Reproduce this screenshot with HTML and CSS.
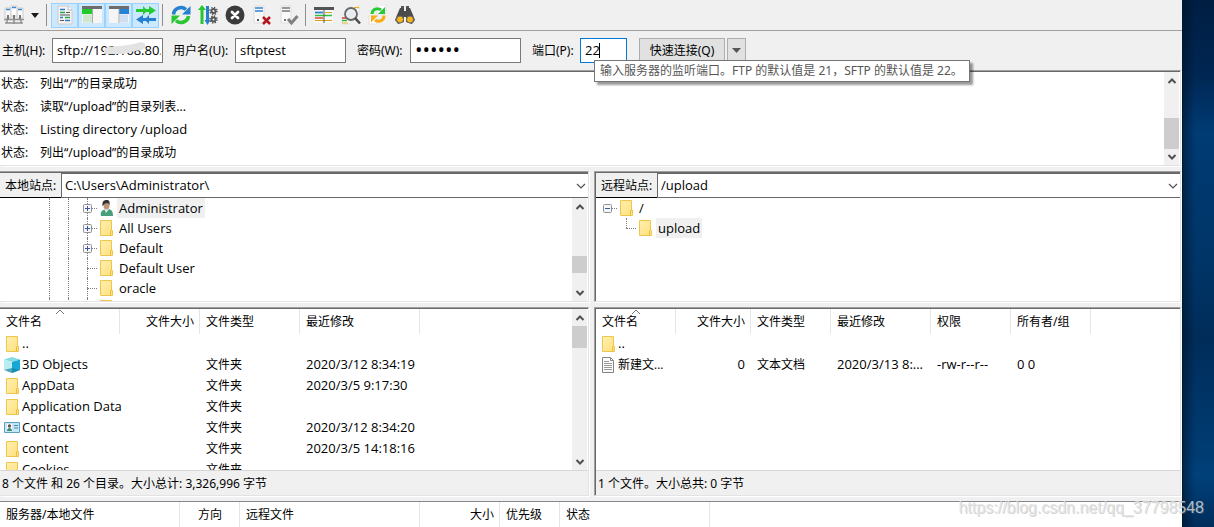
FILE: index.html
```html
<!DOCTYPE html>
<html lang="zh-CN">
<head>
<meta charset="utf-8">
<title>FileZilla</title>
<link rel="stylesheet" href="styles.css">
</head>
<body>
<svg class="defs" aria-hidden="true">
  <defs>
    <linearGradient id="fold" x1="0" y1="0" x2="1" y2="1"><stop offset="0" stop-color="#ffefb0"/><stop offset="1" stop-color="#ffe07c"/></linearGradient>
    <symbol id="folder" viewBox="0 0 13 16"><path d="M.5.5h11v10h1v5H.5z" fill="url(#fold)" stroke="#eec64e"/><path d="M10.5 15.500v-4.500l1-1" fill="none" stroke="#eabb3c"/></symbol>
    <symbol id="up" viewBox="0 0 10 8"><path d="M1.500 6 5 2.500 8.500 6" fill="none" stroke="#505050" stroke-width="2"/></symbol>
    <symbol id="down" viewBox="0 0 10 8"><path d="M1.500 2 5 5.500 8.500 2" fill="none" stroke="#505050" stroke-width="2"/></symbol>
    <symbol id="thin" viewBox="0 0 10 6"><path d="M1 1l4 4 4-4" fill="none" stroke="#505050" stroke-width="1.200"/></symbol>
    <symbol id="sort" viewBox="0 0 10 6"><path d="M1 5l4-4 4 4" fill="none" stroke="#707070"/></symbol>
    <symbol id="plus" viewBox="0 0 9 9"><rect x=".5" y=".5" width="8" height="8" rx="1" fill="#f6f6f6" stroke="#919191"/><path d="M2 4.500h5M4.500 2v5" stroke="#3657a5"/></symbol>
    <symbol id="minus" viewBox="0 0 9 9"><rect x=".5" y=".5" width="8" height="8" rx="1" fill="#f6f6f6" stroke="#919191"/><path d="M2 4.500h5" stroke="#3657a5"/></symbol>
  </defs>
</svg>
<main class="app">
  <div class="toolbar" role="toolbar">
    <button class="tool" aria-label="站点管理器"><svg width="22" height="22" viewBox="0 0 22 22"><path d="M2 4h6v10H2zM14 4h6v10h-6z" fill="#fafafa" stroke="#ccc"/><path d="M8 2h6v10H8z" fill="#fff" stroke="#ccc"/><path d="M3 5.500h4M9 3.500h4M15 5.500h4" stroke="#3c8ad0" stroke-width="1.500"/><path d="M5 11v4M11 11v5M17 11v4" stroke="#777" stroke-width="2"/><path d="M1 15.500h20M2 19h18M4 15v4M11 15v5M18 15v4" stroke="#909090" stroke-width="1.500"/></svg></button>
    <button class="caret" aria-label="站点列表"><svg width="8" height="5" viewBox="0 0 8 5"><path d="M0 0h8L4 5z" fill="#1b1b1b"/></svg></button>
    <span class="sep"></span>
    <button class="tool on" aria-label="消息日志"><svg width="20" height="20" viewBox="0 0 20 20"><path d="M3 1h10l4 4v14H3z" fill="#f4f4f4" stroke="#ccc"/><path d="M13 1v4h4" fill="#fff" stroke="#bbb"/><path d="M5 4.500h5M5 12.500h3M10 15.500h5" stroke="#2d79c7" stroke-width="1.400"/><path d="M5 7.500h5M10 12.500h5" stroke="#25a843" stroke-width="1.400"/><path d="M11 7.500h4M5 10h10M5 15.500h4" stroke="#555" stroke-width="1.200"/></svg></button>
    <button class="tool on" aria-label="本地目录树"><svg width="20" height="20" viewBox="0 0 20 20"><path d="M0 1h20v17H0z" fill="#f5f5f5"/><path d="M0 1h20v3H0z" fill="#6d6d6d"/><path d="M0 4h10v5H0z" fill="#20ca2a"/><path d="M1 9.500h9v8H1z" fill="#cfe7cf"/><path d="M10.500 4v14" stroke="#aaa"/></svg></button>
    <button class="tool on" aria-label="远程目录树"><svg width="20" height="20" viewBox="0 0 20 20"><path d="M0 1h20v17H0z" fill="#f5f5f5"/><path d="M0 1h20v3H0z" fill="#6d6d6d"/><path d="M10 4h10v5H10z" fill="#2581d8"/><path d="M11 9.500h8v8h-8z" fill="#cddff0"/><path d="M10 4v14" stroke="#aaa"/></svg></button>
    <button class="tool on" aria-label="传输队列"><svg width="20" height="20" viewBox="0 0 20 20"><path d="M0 4h7V1l3 3h3V1l7 4.500-7 4.500V7h-3l-3 3V7H0z" fill="#25cb31"/><path d="M20 13h-7v-3l-3 3H7v-3l-7 4.500L7 19v-3h3l3 3v-3h7z" fill="#257fd3"/></svg></button>
    <span class="sep"></span>
    <button class="tool" aria-label="刷新"><svg width="20" height="20" viewBox="0 0 20 20"><path d="M2.500 9.500A7.500 7.500 0 0 1 15 4.500" fill="none" stroke="#2680d2" stroke-width="3.600"/><path d="M19.500 1v8.500H11z" fill="#2680d2"/><path d="M17.500 11A7.500 7.500 0 0 1 5 15.500" fill="none" stroke="#28c733" stroke-width="3.600"/><path d="M.5 19v-8.500H9z" fill="#28c733"/></svg></button>
    <button class="tool" aria-label="处理队列"><svg width="20" height="20" viewBox="0 0 20 20"><path d="M4 0 0 5h2.500v14h3V5H8z" fill="#25c831"/><path d="m9.500 20 3-5H11V1H8v14H6.500z" fill="#257fd3"/><circle cx="15.500" cy="6" r="2" fill="none" stroke="#555" stroke-width="1.800"/><circle cx="15.500" cy="6" r="3.500" fill="none" stroke="#555" stroke-width="1.500" stroke-dasharray="1.375"/><circle cx="15.500" cy="14.500" r="2" fill="none" stroke="#555" stroke-width="1.800"/><circle cx="15.500" cy="14.500" r="3.500" fill="none" stroke="#555" stroke-width="1.500" stroke-dasharray="1.375"/></svg></button>
    <button class="tool" aria-label="取消"><svg width="20" height="20" viewBox="0 0 20 20"><circle cx="10" cy="10" r="9.500" fill="#3b3b3b"/><path d="m7 7 6 6m0-6-6 6" stroke="#fff" stroke-width="2.800" stroke-linecap="round"/></svg></button>
    <button class="tool" aria-label="断开连接"><svg width="20" height="20" viewBox="0 0 20 20"><path d="M2 1h10v17H2z" fill="#f9f9f9" stroke="#ddd"/><path d="M3 3h8M3 6h8" stroke="#3183d1" stroke-width="1.700"/><path d="M5 15h2" stroke="#555" stroke-width="2"/><path d="m11 12 7 7m0-7-7 7" stroke="#b3161d" stroke-width="2.500"/></svg></button>
    <button class="tool" aria-label="重新连接"><svg width="20" height="20" viewBox="0 0 20 20"><path d="M2 1h10v17H2z" fill="#f9f9f9" stroke="#ddd"/><path d="M3 3h8M3 6h8" stroke="#777" stroke-width="1.500"/><path d="M5 15h2" stroke="#777" stroke-width="2"/><path d="m9 14 3.500 4 6-7" fill="none" stroke="#808080" stroke-width="3"/></svg></button>
    <span class="sep"></span>
    <button class="tool" aria-label="过滤器"><svg width="20" height="20" viewBox="0 0 20 20"><path d="M1 2h18v16H1z" fill="#f8f8f8"/><path d="M0 2h20v3H0z" fill="#535353"/><path d="M1 7.500h8" stroke="#2c80cb" stroke-width="1.800"/><path d="M1 10.500h17" stroke="#31c03c" stroke-width="1.500"/><path d="M1 13h8" stroke="#e14545" stroke-width="1.500"/><path d="M11 7.500h7M1 15.500h17" stroke="#d6a520"/><path d="M10 2v16" stroke="#555"/></svg></button>
    <button class="tool" aria-label="搜索"><svg width="20" height="20" viewBox="0 0 20 20"><path d="M11 0h7v9h-7zM1 10h8v9H1z" fill="#fff" stroke="#e2e2e2"/><path d="M13 2.500h5" stroke="#e6b02c" stroke-width="1.500"/><path d="M1 13h6" stroke="#e22f2f" stroke-width="1.500"/><path d="M1 15.500h5" stroke="#2ab738" stroke-width="1.500"/><path d="M1 18h6" stroke="#ddb032"/><circle cx="10" cy="9" r="6" fill="#e9edf0" stroke="#686868" stroke-width="1.800"/><path d="m14 13 5 5.500" stroke="#4c4c4c" stroke-width="2.600"/></svg></button>
    <button class="tool" aria-label="同步浏览"><svg width="20" height="20" viewBox="0 0 20 20"><path d="M9 0h9v9H9zM1 11h8v8H1z" fill="#fff" stroke="#e1e1e1"/><path d="M4 9A5.500 5.500 0 0 1 13 5" fill="none" stroke="#28c936" stroke-width="3"/><path d="M17 2v7h-7z" fill="#28c936"/><path d="M16 10.500A5.500 5.500 0 0 1 7 15" fill="none" stroke="#f5ae19" stroke-width="3"/><path d="M3 17.500v-7h7z" fill="#f5ae19"/></svg></button>
    <button class="tool" aria-label="查找文件"><svg width="20" height="20" viewBox="0 0 20 20"><path d="M5 3h4v3h2V3h4l3 7 2 5-3 4-6-2v-5H9v5l-6 2-3-4 2-5z" fill="#4c4c4c"/><path d="M6 1h3v2H6zm5 0h3v2h-3z" fill="#555"/><circle cx="5" cy="14.500" r="3.500" fill="#f7b51b" stroke="#666"/><circle cx="15" cy="14.500" r="3.500" fill="#f7b51b" stroke="#666"/></svg></button>
  </div>

  <form class="quick">
    <label for="host">主机(H):</label>
    <span class="host"><input id="host" class="field" value="sftp://192.168.80.1"><svg class="smudge" width="44" height="14" viewBox="0 0 44 14"><path d="M1 8C4 3 10 5 17 4S27 3 34 1s9 1 8 4-4 3-10 4-8 3-16 3S0 14 1 8z" fill="#e3e3e3"/></svg></span>
    <label for="user">用户名(U):</label>
    <input id="user" class="field" value="sftptest">
    <label for="pass">密码(W):</label>
    <input id="pass" class="field" type="password" value="secret">
    <label for="port" class="portlabel">端口(P):</label>
    <span class="port"><input id="port" class="field focused" value="22"><i class="cursor"></i><span class="tip" role="tooltip">输入服务器的监听端口。FTP 的默认值是 21，SFTP 的默认值是 22。</span></span>
    <button type="button" class="connect">快速连接(Q)</button>
    <button type="button" class="history" aria-label="历史"><svg width="9" height="5" viewBox="0 0 9 5"><path d="M0 0h9L4.500 5z" fill="#555"/></svg></button>
  </form>

  <section class="panel log">
    <dl class="messages">
      <dt>状态:</dt><dd>列出“/”的目录成功</dd>
      <dt>状态:</dt><dd>读取“/upload”的目录列表...</dd>
      <dt>状态:</dt><dd class="latin">Listing directory /upload</dd>
      <dt>状态:</dt><dd>列出“/upload”的目录成功</dd>
    </dl>
    <div class="scroll"><svg width="10" height="8"><use href="#up"/></svg><div class="track end"><i class="thumb long"></i></div><svg width="10" height="8"><use href="#down"/></svg></div>
  </section>

  <div class="split trees">
    <section class="panel pane local">
      <div class="site"><label for="lpath">本地站点:</label><span class="combo"><select id="lpath"><option>C:\Users\Administrator\</option></select><svg width="10" height="6"><use href="#thin"/></svg></span></div>
      <div class="view">
        <ul class="tree deep">
          <li><i class="guide"></i><i class="guide"></i><span class="node"><svg width="9" height="9"><use href="#plus"/></svg></span><svg class="ico" width="13" height="16" viewBox="0 0 13 16"><path d="M1 16c-1-4 1-6 4-6.500l4-.5c3 1 4 3 4 7z" fill="#46a07b"/><path d="M4.500 9 6 13l3-4z" fill="#eee"/><ellipse cx="6.500" cy="5.500" rx="3" ry="4" fill="#bf9478"/><path d="M2.500 6C2 2 3.500 0 6.500 0S10 2 9.500 5L8 3 5 3.500z" fill="#383030"/></svg><span class="name picked">Administrator</span></li>
          <li><i class="guide"></i><i class="guide"></i><span class="node"><svg width="9" height="9"><use href="#plus"/></svg></span><svg class="ico" width="13" height="16"><use href="#folder"/></svg><span class="name">All Users</span></li>
          <li><i class="guide"></i><i class="guide"></i><span class="node"><svg width="9" height="9"><use href="#plus"/></svg></span><svg class="ico" width="13" height="16"><use href="#folder"/></svg><span class="name">Default</span></li>
          <li><i class="guide"></i><i class="guide"></i><span class="node"></span><svg class="ico" width="13" height="16"><use href="#folder"/></svg><span class="name">Default User</span></li>
          <li><i class="guide"></i><i class="guide"></i><span class="node"></span><svg class="ico" width="13" height="16"><use href="#folder"/></svg><span class="name">oracle</span></li>
          <li><i class="guide"></i><i class="guide"></i><span class="node"></span><svg class="ico" width="13" height="16"><use href="#folder"/></svg></li>
        </ul>
        <div class="scroll"><svg width="10" height="8"><use href="#up"/></svg><div class="track near"><i class="thumb"></i></div><svg width="10" height="8"><use href="#down"/></svg></div>
      </div>
    </section>
    <section class="panel pane remote">
      <div class="site"><label for="rpath">远程站点:</label><span class="combo"><select id="rpath"><option>/upload</option></select><svg width="10" height="6"><use href="#thin"/></svg></span></div>
      <div class="view">
        <ul class="tree">
          <li><span class="node root"><svg width="9" height="9"><use href="#minus"/></svg></span><svg class="ico" width="13" height="16"><use href="#folder"/></svg><span class="name">/</span></li>
          <li><i class="guide blank"></i><span class="node last"></span><svg class="ico" width="13" height="16"><use href="#folder"/></svg><span class="name picked">upload</span></li>
        </ul>
      </div>
    </section>
  </div>

  <div class="split lists">
    <section class="panel pane local">
      <div class="view">
        <div class="files">
        <table>
          <colgroup><col class="w120"><col class="w80"><col class="w100"><col class="w120"><col></colgroup>
          <thead><tr><th>文件名<svg class="sort" width="10" height="6"><use href="#sort"/></svg></th><th class="num">文件大小</th><th>文件类型</th><th>最近修改</th><th></th></tr></thead>
          <tbody>
            <tr><td><span class="file"><svg width="13" height="16"><use href="#folder"/></svg>..</span></td><td></td><td></td><td></td><td></td></tr>
            <tr><td><span class="file wide"><svg width="16" height="16" viewBox="0 0 16 16"><path d="M0 2.500 8 0l8 2.500L8 5z" fill="#83dbe4"/><path d="M0 2.500 8 5v11l-8-3z" fill="#b9eef1"/><path d="M8 5l8-2.500V13l-8 3z" fill="#18a8d8"/><path d="m0 13 8-2 8 2-8 3z" fill="#16809d" opacity=".65"/></svg>3D Objects</span></td><td></td><td>文件夹</td><td class="latin">2020/3/12 8:34:19</td><td></td></tr>
            <tr><td><span class="file"><svg width="13" height="16"><use href="#folder"/></svg>AppData</span></td><td></td><td>文件夹</td><td class="latin">2020/3/5 9:17:30</td><td></td></tr>
            <tr><td><span class="file"><svg width="13" height="16"><use href="#folder"/></svg>Application Data</span></td><td></td><td>文件夹</td><td></td><td></td></tr>
            <tr><td><span class="file wide"><svg width="16" height="16" viewBox="0 0 16 16"><path d="M.5 2.500h15v10H.5z" fill="#c5e7f9" stroke="#5c9fc4"/><path d="M3 4h5v7H3z" fill="#fff"/><circle cx="5.500" cy="6" r="1.700" fill="#695448"/><path d="M3 11c0-4 5-4 5 0z" fill="#3a8f6c"/><path d="M10 5.500h4M10 8h4" stroke="#4885a9"/></svg>Contacts</span></td><td></td><td>文件夹</td><td class="latin">2020/3/12 8:34:20</td><td></td></tr>
            <tr><td><span class="file"><svg width="13" height="16"><use href="#folder"/></svg>content</span></td><td></td><td>文件夹</td><td class="latin">2020/3/5 14:18:16</td><td></td></tr>
            <tr><td><span class="file"><svg width="13" height="16"><use href="#folder"/></svg>Cookies</span></td><td></td><td>文件夹</td><td></td><td></td></tr>
          </tbody>
        </table>
        </div>
        <div class="scroll"><svg width="10" height="8"><use href="#up"/></svg><div class="track"><i class="thumb tall"></i></div><svg width="10" height="8"><use href="#down"/></svg></div>
      </div>
      <p class="status">8 个文件 和 26 个目录。大小总计: 3,326,996 字节</p>
    </section>
    <section class="panel pane remote">
      <div class="view">
        <div class="files">
        <table>
          <colgroup><col class="w80"><col class="w75"><col class="w80"><col class="w100"><col class="w80"><col class="w80"><col></colgroup>
          <thead><tr><th>文件名<svg class="sort" width="10" height="6"><use href="#sort"/></svg></th><th class="num">文件大小</th><th>文件类型</th><th>最近修改</th><th>权限</th><th>所有者/组</th><th></th></tr></thead>
          <tbody>
            <tr><td><span class="file"><svg width="13" height="16"><use href="#folder"/></svg>..</span></td><td></td><td></td><td></td><td></td><td></td><td></td></tr>
            <tr><td><span class="file doc"><svg width="12" height="16" viewBox="0 0 12 16"><path d="M.5.5h8l3 3v12H.5z" fill="#fbfbfb" stroke="#858585"/><path d="M8.500.5v3h3" fill="none" stroke="#858585"/><path d="M2 4.500h5M2 6.500h8M2 8.500h8M2 10.500h8M2 12.500h8" stroke="#999"/></svg>新建文...</span></td><td class="num latin">0</td><td>文本文档</td><td class="latin">2020/3/13 8:...</td><td class="latin">-rw-r--r--</td><td class="latin">0 0</td><td></td></tr>
          </tbody>
        </table>
        </div>
      </div>
      <p class="status">1 个文件。大小总共: 0 字节</p>
    </section>
  </div>

  <section class="queue">
    <table>
      <colgroup><col class="w180"><col class="w60"><col class="w180"><col class="w80"><col class="w60"><col class="w150"><col></colgroup>
      <thead><tr><th>服务器/本地文件</th><th class="center">方向</th><th>远程文件</th><th class="num">大小</th><th>优先级</th><th>状态</th><th></th></tr></thead>
    </table>
  </section>
</main>
<aside class="desktop"></aside>
<span class="watermark">https://blog.csdn.net/qq_37798548</span>
</body>
</html>
```

FILE: styles.css
```css
* { box-sizing: border-box; }
body {
  margin: 0;
  height: 100vh;
  overflow: hidden;
  display: flex;
  position: relative;
  font: 12px/20px "Noto Sans", "Noto Sans CJK SC", sans-serif;
  color: #000;
}
button, input, select { font: inherit; color: inherit; margin: 0; }
svg { display: block; flex: none; }
.defs { position: absolute; width: 0; height: 0; }
.app { flex: 1; min-width: 0; display: flex; flex-direction: column; background: #f0f0f0; }
.desktop {
  flex: 0 0 32px;
  border-left: 1px solid #001a30;
  background:
    linear-gradient(90deg, rgba(0, 15, 35, .5), transparent 12px),
    linear-gradient(#001e42, #002652 14%, #003b74 25%, #003567 50%, #002c59 64%, #003d74 87%, #00417a 90%, #002d5b);
}
.latin, .name, .file, .field, .combo select { font-family: "Open Sans", "Noto Sans CJK SC", sans-serif; font-size: 13px; }

/* Toolbar */
.toolbar { flex: none; display: flex; align-items: center; height: 31px; border-bottom: 1px solid #a0a0a0; }
.tool, .caret { border: 1px solid transparent; background: none; padding: 0; display: flex; align-items: center; justify-content: center; }
.tool { width: 27px; height: 25px; }
.tool.on { background: #cce8ff; border-color: #99d1ff; }
.caret { width: 16px; height: 25px; }
.sep { width: 1px; height: 22px; background: #8d8d8d; margin: 0 4px 0 3px; }

/* Quick connect */
.quick { flex: none; display: flex; align-items: center; height: 39px; padding-left: 2px; gap: 6px; }
.quick label { min-width: 44px; white-space: nowrap; }
.quick label[for="user"] { min-width: 56px; margin-left: 4px; }
.quick label[for="pass"] { min-width: 47px; margin-left: 5px; }
.quick .portlabel { min-width: 42px; margin-left: 5px; }
.host, .port { position: relative; display: flex; }
.field { width: 111px; height: 25px; border: 1px solid #7a7a7a; border-radius: 0; background: #fff; padding: 0 1px 2px 4px; outline: none; }
.field[type="password"] { font-size: 20px; }
.port .field { width: 47px; }
.port .focused { border-color: #0078d7; }
.smudge { position: absolute; left: 51px; top: 4px; }
.cursor { position: absolute; left: 19px; top: 5px; width: 1px; height: 15px; background: #000; }
.tip {
  position: absolute; z-index: 2; left: 14px; top: 22px;
  border: 1px solid #767676; background: #fff; color: #575757;
  padding: 0 6px 0 5px; white-space: nowrap; box-shadow: 3px 3px 2px rgba(0, 0, 0, .4);
}
.connect, .history { height: 25px; border: 1px solid #adadad; background: #e1e1e1; padding: 0; display: flex; align-items: center; justify-content: center; }
.connect { width: 86px; margin-left: 6px; }
.history { width: 19px; margin-left: -4px; }

/* Sunken panels */
.panel { background: #fff; border-top: 1px solid #a0a0a0; border-bottom: 1px solid #e3e3e3; border-right: 1px solid #e3e3e3; box-shadow: inset 0 1px #696969, 1px 1px #fff; padding-top: 1px; margin-right: 1px; }
.remote { border-left: 1px solid #a0a0a0; box-shadow: inset 1px 1px #696969, 1px 1px #fff; padding-left: 1px; }
.log { flex: 0 0 96px; display: flex; overflow: hidden; }
.messages { flex: 1; margin: 0; padding: 0 1px; display: grid; grid-template-columns: 39px 1fr; grid-auto-rows: 23px; line-height: 23px; }
.messages dd { margin: 0; }

/* Scroll bars */
.scroll { flex: 0 0 16px; display: flex; flex-direction: column; align-items: center; padding: 5px 1px 4px 0; background: linear-gradient(90deg, #f0f0f0 15px, #fff 15px); }
.track { flex: 1; width: 15px; display: flex; flex-direction: column; padding: 4px 0; }
.thumb { height: 17px; background: #cdcdcd; }
.thumb.long { height: 31px; }
.thumb.tall { height: 22px; }
.end { justify-content: flex-end; }
.near { justify-content: flex-end; padding-bottom: 16px; }

/* Split areas */
.split { display: grid; grid-template-columns: 590fr 588fr; gap: 4px; min-height: 0; }
.trees { flex: 0 0 131px; margin-top: 5px; }
.lists { flex: 1; margin-top: 5px; }
.pane { display: flex; flex-direction: column; min-width: 0; min-height: 0; overflow: hidden; }
.site { flex: none; display: flex; height: 25px; }
.site label { flex: 0 0 61px; padding-left: 5px; background: #f0f0f0; border-bottom: 1px solid #000; line-height: 25px; white-space: nowrap; }
.combo { flex: 1; position: relative; display: flex; }
.combo select { flex: 1; appearance: none; border: 1px solid #696969; border-right: 0; border-radius: 0; background: #fff; padding: 0 3px 2px; outline: none; }
.combo svg { position: absolute; right: 2px; top: 10px; pointer-events: none; }
.view { flex: 1; min-height: 0; display: flex; overflow: hidden; }

/* Trees */
.tree { flex: 1; list-style: none; margin: 0; padding: 0 0 0 2px; }
.tree.deep { padding-left: 40px; }
.tree li { display: flex; align-items: center; height: 20px; }
.guide, .node { width: 19px; height: 20px; position: relative; }
.guide::before, .node::before { content: ""; position: absolute; left: 9px; top: 0; bottom: 0; border-left: 1px dotted #808080; }
.node::after { content: ""; position: absolute; left: 9px; right: 0; top: 10px; border-top: 1px dotted #808080; }
.guide.blank::before, .node.root::before { display: none; }
.node.last::before { bottom: 10px; }
.node svg { position: absolute; z-index: 1; left: 5px; top: 6px; }
.ico { margin: 0 4px 0 3px; }
.name { padding: 0 2px; line-height: 20px; }
.picked { background: #f0f0f0; }

/* File lists */
.files { flex: 1; min-width: 0; overflow: hidden; }
table { width: 100%; table-layout: fixed; border-collapse: collapse; }
th { position: relative; height: 25px; padding: 0 6px; box-shadow: inset -1px 0 #e5e5e5; font-weight: 400; text-align: left; white-space: nowrap; }
th:last-child { box-shadow: none; }
td { height: 21px; padding: 0 6px; white-space: nowrap; line-height: 19px; vertical-align: top; }
.num { text-align: right; }
.center { text-align: center; }
.sort { position: absolute; left: 50%; top: 0; margin-left: -5px; }
.file { display: flex; align-items: center; gap: 3px; }
.wide { margin-left: -2px; gap: 2px; }
.doc { font-size: 12px; gap: 4px; }
.w60 { width: 60px; }
.w75 { width: 75px; }
.w80 { width: 80px; }
.w100 { width: 100px; }
.w120 { width: 120px; }
.w150 { width: 150px; }
.w180 { width: 180px; }
.status { flex: none; margin: 0; height: 25px; padding: 0 2px; line-height: 25px; background: #f0f0f0; border-top: 1px solid #d7d7d7; }
.queue { flex: none; margin-top: 5px; border-top: 1px solid #828790; background: #fff; }

.watermark { position: absolute; right: 10px; bottom: 8px; font: 16px/22px "Liberation Sans", sans-serif; color: rgba(225, 225, 225, .8); text-shadow: 1px 1px rgba(130, 130, 130, .35); }
```
